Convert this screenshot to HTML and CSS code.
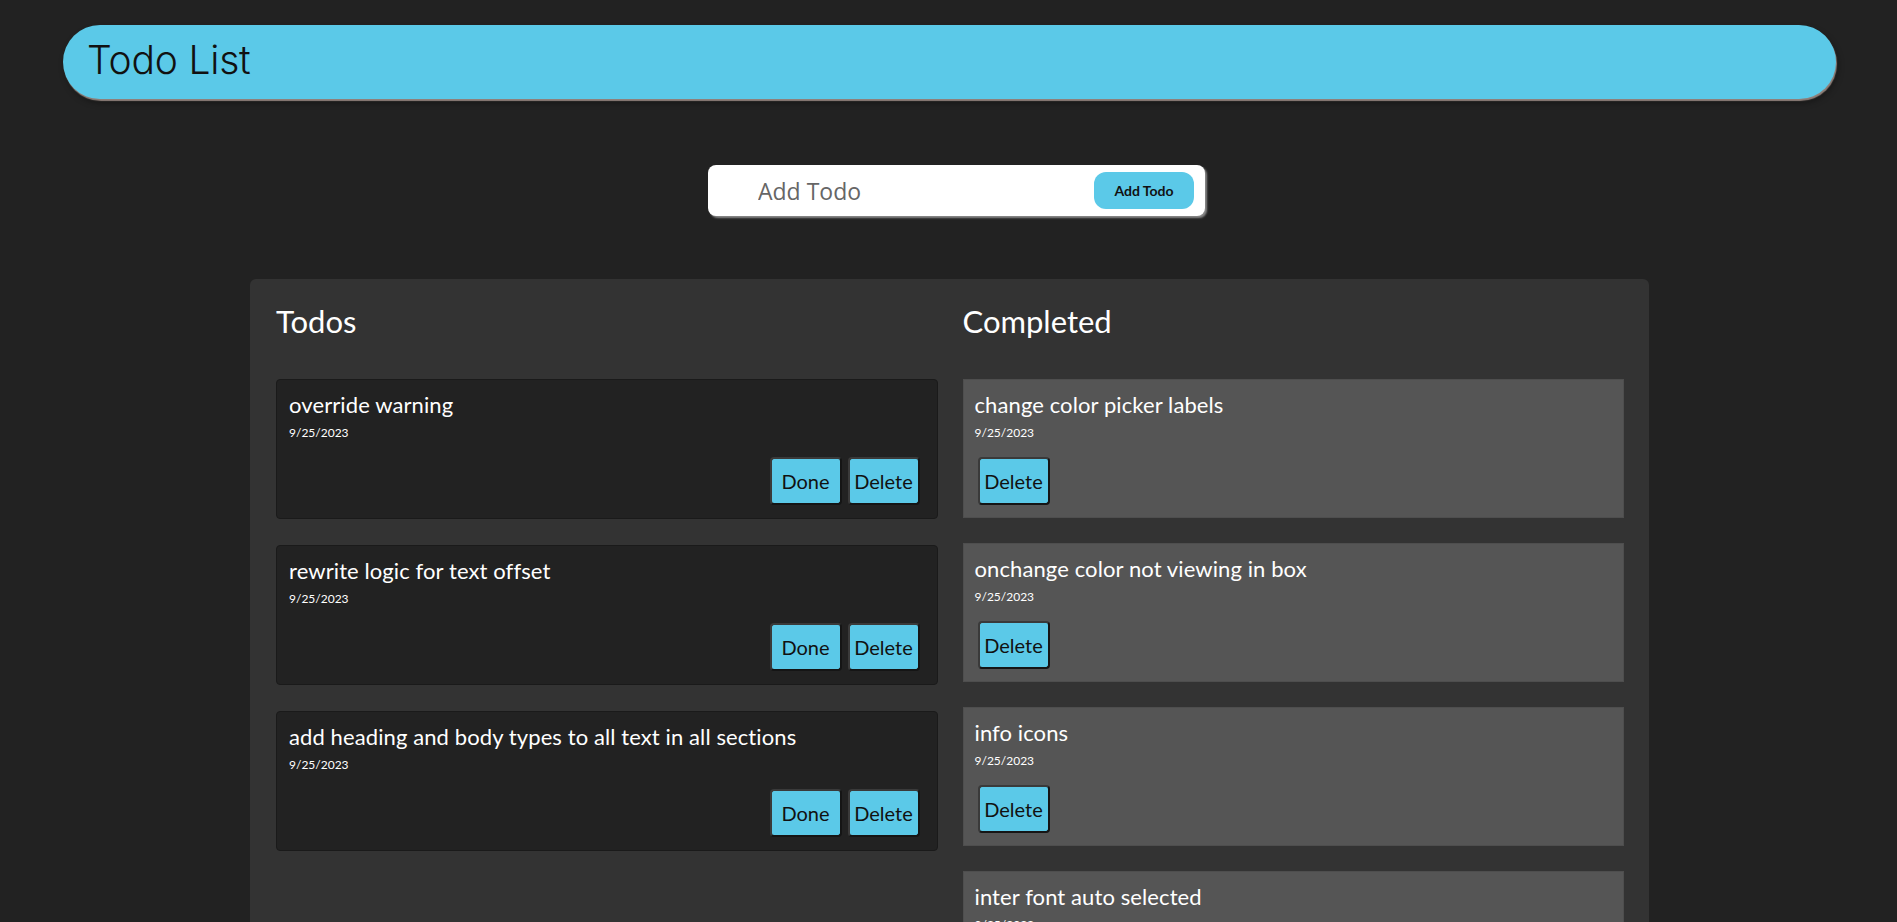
FILE: index.html
```html
<!DOCTYPE html>
<html>
<head>
<meta charset="utf-8">
<title>Todo List</title>
<link rel="stylesheet" href="styles.css">
</head>
<body>
<header class="app-header"><h1 class="app-title">Todo List</h1></header>
<div class="add-row">
  <form class="add-form">
    <input class="add-input" type="text" placeholder="Add Todo">
    <button class="add-btn" type="button">Add Todo</button>
  </form>
</div>
<main class="board">
  <section class="column">
    <h2 class="col-title">Todos</h2>
    <div class="list">
      <div class="card todo">
        <div class="card-title">override warning</div>
        <div class="card-date">9/25/2023</div>
        <div class="actions right"><button class="btn">Done</button><button class="btn">Delete</button></div>
      </div>
      <div class="card todo">
        <div class="card-title">rewrite logic for text offset</div>
        <div class="card-date">9/25/2023</div>
        <div class="actions right"><button class="btn">Done</button><button class="btn">Delete</button></div>
      </div>
      <div class="card todo">
        <div class="card-title">add heading and body types to all text in all sections</div>
        <div class="card-date">9/25/2023</div>
        <div class="actions right"><button class="btn">Done</button><button class="btn">Delete</button></div>
      </div>
    </div>
  </section>
  <section class="column">
    <h2 class="col-title">Completed</h2>
    <div class="list">
      <div class="card done">
        <div class="card-title">change color picker labels</div>
        <div class="card-date">9/25/2023</div>
        <div class="actions"><button class="btn">Delete</button></div>
      </div>
      <div class="card done">
        <div class="card-title">onchange color not viewing in box</div>
        <div class="card-date">9/25/2023</div>
        <div class="actions"><button class="btn">Delete</button></div>
      </div>
      <div class="card done">
        <div class="card-title">info icons</div>
        <div class="card-date">9/25/2023</div>
        <div class="actions"><button class="btn">Delete</button></div>
      </div>
      <div class="card done">
        <div class="card-title">inter font auto selected</div>
        <div class="card-date">9/25/2023</div>
        <div class="actions"><button class="btn">Delete</button></div>
      </div>
    </div>
  </section>
</main>
</body>
</html>
```
FILE: styles.css
```css
html, body {
  margin: 0;
  padding: 0;
  background: #222222;
}
body {
  font-family: Lato, "Liberation Sans", sans-serif;
  color: #fff;
  padding-bottom: 40px;
}
.app-header {
  margin: 25px 61px 0 63px;
  height: 74px;
  box-sizing: border-box;
  background: #5bc9e8;
  border-radius: 38px;
  box-shadow: 1px 2px 1px #8f807a, 2px 4px 6px rgba(0,0,0,0.35);
  display: flex;
  align-items: center;
  padding: 0 0 6px 24px;
}
.app-title {
  margin: 0;
  font-family: Inter, "Open Sans", sans-serif;
  font-weight: 300;
  font-size: 39px;
  color: #111;
  letter-spacing: -0.2px;
}
.add-row {
  display: flex;
  justify-content: center;
  padding-left: 16px;
  margin-top: 66px;
}
.add-form {
  width: 497px;
  height: 51px;
  box-sizing: border-box;
  background: #fff;
  border-radius: 8px;
  box-shadow: 2px 2px 2px #8a8a8a;
  display: flex;
  align-items: center;
  padding: 0 11px 0 50px;
  margin: 0;
}
.add-input {
  flex: 1;
  border: none;
  outline: none;
  background: transparent;
  font-family: "Open Sans", sans-serif;
  font-size: 23px;
  color: #555;
  padding: 0;
  min-width: 0;
}
.add-input::placeholder {
  color: #666;
}
.add-btn {
  width: 100px;
  height: 37px;
  border: none;
  border-radius: 12px;
  background: #5bc9e8;
  color: #111;
  font-family: Lato, sans-serif;
  font-weight: 700;
  font-size: 14px;
  padding: 0;
}
.board {
  margin: 63px 248px 0 250px;
  background: #333333;
  border-radius: 6px;
  padding: 24px 25px 30px 26px;
  display: grid;
  grid-template-columns: 1fr 1fr;
  column-gap: 25px;
  align-items: start;
}
.col-title {
  margin: 0 0 40px;
  font-size: 31px;
  line-height: 36px;
  font-weight: 400;
  color: #fff;
}
.list {
  display: flex;
  flex-direction: column;
  gap: 25px;
}
.card {
  padding: 13px 12px 13px;
}
.card.todo {
  background: #222222;
  border: 1px solid #1a1a1a;
  border-radius: 4px;
  padding: 12px 12px 13px;
  margin-bottom: 1px;
}
.card.done {
  background: #555555;
  box-shadow: inset 0 0 0 1px #4e4e4e;
}
.card-title {
  font-size: 22px;
  line-height: 26px;
  color: #fff;
  letter-spacing: 0.1px;
}
.card-date {
  margin-top: 8px;
  font-size: 12px;
  line-height: 14px;
  color: #fff;
}
.actions {
  margin-top: 17px;
  display: flex;
}
.actions.right {
  justify-content: flex-end;
}
.btn {
  width: 72px;
  height: 48px;
  margin: 0 3px;
  padding: 0;
  background: #5bc9e8;
  color: #111;
  border: 2px solid #151515;
  border-top-color: #3a3a3a;
  border-left-color: #3a3a3a;
  border-radius: 4px;
  font-family: Lato, sans-serif;
  font-size: 20px;
}
.actions.right .btn:last-child {
  margin-right: 5px;
}
```
